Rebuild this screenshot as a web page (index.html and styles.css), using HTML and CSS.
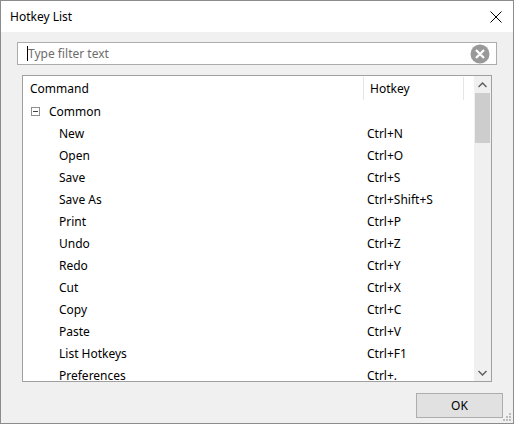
FILE: index.html
```html
<!DOCTYPE html>
<html>
<head>
<meta charset="utf-8">
<link rel="stylesheet" href="styles.css">
</head>
<body>
<div class="window">
  <div class="titlebar">
    <span class="title">Hotkey List</span>
    <svg class="close" width="12" height="12" viewBox="0 0 12 12"><path d="M0.5 0.5 L11.5 11.5 M11.5 0.5 L0.5 11.5" stroke="#000" stroke-width="1" fill="none"/></svg>
  </div>
  <div class="content">
    <div class="filter">
      <span class="caret"></span><span class="placeholder">Type filter text</span>
      <svg class="clear" width="20" height="20" viewBox="0 0 20 20"><circle cx="10" cy="10" r="9.5" fill="#999"/><path d="M6 6 L14 14 M14 6 L6 14" stroke="#fff" stroke-width="2.2" fill="none"/></svg>
    </div>
    <div class="list">
      <div class="listmain">
        <div class="header">
          <div class="hcol hcmd">Command</div>
          <div class="hcol hkey">Hotkey</div>
          <div class="hcol hrest"></div>
        </div>
        <div class="rows">
          <div class="row group"><span class="expander"><span class="minus"></span></span><span class="cmd">Common</span><span class="key"></span></div>
          <div class="row"><span class="cmd child">New</span><span class="key">Ctrl+N</span></div>
          <div class="row"><span class="cmd child">Open</span><span class="key">Ctrl+O</span></div>
          <div class="row"><span class="cmd child">Save</span><span class="key">Ctrl+S</span></div>
          <div class="row"><span class="cmd child">Save As</span><span class="key">Ctrl+Shift+S</span></div>
          <div class="row"><span class="cmd child">Print</span><span class="key">Ctrl+P</span></div>
          <div class="row"><span class="cmd child">Undo</span><span class="key">Ctrl+Z</span></div>
          <div class="row"><span class="cmd child">Redo</span><span class="key">Ctrl+Y</span></div>
          <div class="row"><span class="cmd child">Cut</span><span class="key">Ctrl+X</span></div>
          <div class="row"><span class="cmd child">Copy</span><span class="key">Ctrl+C</span></div>
          <div class="row"><span class="cmd child">Paste</span><span class="key">Ctrl+V</span></div>
          <div class="row"><span class="cmd child">List Hotkeys</span><span class="key">Ctrl+F1</span></div>
          <div class="row"><span class="cmd child">Preferences</span><span class="key">Ctrl+.</span></div>
        </div>
      </div>
      <div class="scrollbar">
        <div class="sbtn"><svg width="9" height="6" viewBox="0 0 9 6"><path d="M0.5 5 L4.5 1 L8.5 5" stroke="#606060" stroke-width="1.5" fill="none"/></svg></div>
        <div class="track"><div class="thumb"></div></div>
        <div class="sbtn"><svg width="9" height="6" viewBox="0 0 9 6"><path d="M0.5 1 L4.5 5 L8.5 1" stroke="#606060" stroke-width="1.5" fill="none"/></svg></div>
      </div>
    </div>
    <div class="footer">
      <button class="ok">OK</button>
    </div>
    <svg class="grip" width="9" height="9" viewBox="0 0 9 9" fill="#bcbcbc"><rect x="6" y="0" width="2" height="2"/><rect x="3" y="3" width="2" height="2"/><rect x="6" y="3" width="2" height="2"/><rect x="0" y="6" width="2" height="2"/><rect x="3" y="6" width="2" height="2"/><rect x="6" y="6" width="2" height="2"/></svg>
  </div>
</div>
</body>
</html>
```
FILE: styles.css
```css
html, body {
  margin: 0;
  padding: 0;
  background: #ffffff;
}
body {
  font-family: "Noto Sans", "Open Sans", sans-serif;
  font-size: 12px;
  color: #000;
}
.window {
  width: 514px;
  height: 424px;
  box-sizing: border-box;
  border: 1px solid #8c8c8c;
  display: flex;
  flex-direction: column;
}
.titlebar {
  height: 31px;
  background: #fff;
  display: flex;
  align-items: center;
  justify-content: space-between;
  padding: 0 10px 0 9px;
  flex-shrink: 0;
}
.title {
  font-size: 12px;
}
.close {
  display: block;
  margin-right: 1px;
}
.content {
  flex: 1;
  background: #f0f0f0;
  position: relative;
  padding: 10px 16px 0 16px;
  display: flex;
  flex-direction: column;
}
.filter {
  height: 23px;
  box-sizing: border-box;
  border: 1px solid #acacac;
  background: #fff;
  display: flex;
  align-items: center;
  padding-left: 9px;
  padding-right: 6px;
}
.caret {
  width: 1px;
  height: 15px;
  background: #000;
  margin-right: 0;
}
.placeholder {
  color: #6d6d6d;
  flex: 1;
}
.clear {
  display: block;
}
.list {
  margin: 10px 5px 0 5px;
  height: 307px;
  box-sizing: border-box;
  border: 1px solid #a0a0a0;
  background: #fff;
  display: flex;
  overflow: hidden;
}
.listmain {
  flex: 1;
  overflow: hidden;
}
.header {
  display: flex;
  height: 24px;
}
.hcol {
  box-sizing: border-box;
  display: flex;
  align-items: center;
  border-right: 1px solid #e5e5e5;
  margin-top: 1px;
}
.hcmd {
  width: 341px;
  padding-left: 7px;
}
.hkey {
  width: 100px;
  padding-left: 6px;
}
.hrest {
  flex: 1;
  border-right: none;
}
.row {
  display: flex;
  height: 22px;
  align-items: center;
}
.expander {
  width: 9px;
  height: 9px;
  box-sizing: border-box;
  border: 1px solid #8e8f8f;
  margin-left: 8px;
  margin-right: 9px;
  display: flex;
  align-items: center;
  justify-content: center;
}
.minus {
  width: 5px;
  height: 1px;
  background: #404040;
}
.cmd {
  width: 340px;
  box-sizing: border-box;
}
.group .cmd {
  width: 314px;
}
.child {
  padding-left: 36px;
}
.key {
  padding-left: 4px;
}
.scrollbar {
  width: 17px;
  background: #f0f0f0;
  display: flex;
  flex-direction: column;
  flex-shrink: 0;
}
.sbtn {
  height: 17px;
  display: flex;
  align-items: center;
  justify-content: center;
}
.track {
  flex: 1;
  padding: 0 1px;
}
.thumb {
  height: 50px;
  background: #cdcdcd;
}
.footer {
  display: flex;
  justify-content: flex-end;
  padding: 11px 10px 0 0;
  margin-right: -16px;
}
.ok {
  width: 87px;
  height: 25px;
  box-sizing: border-box;
  border: 1px solid #adadad;
  background: #e1e1e1;
  font-family: "Noto Sans", "Open Sans", sans-serif;
  font-size: 12px;
  color: #000;
  padding: 0;
}
.grip {
  position: absolute;
  right: 1px;
  bottom: 1px;
}
```
